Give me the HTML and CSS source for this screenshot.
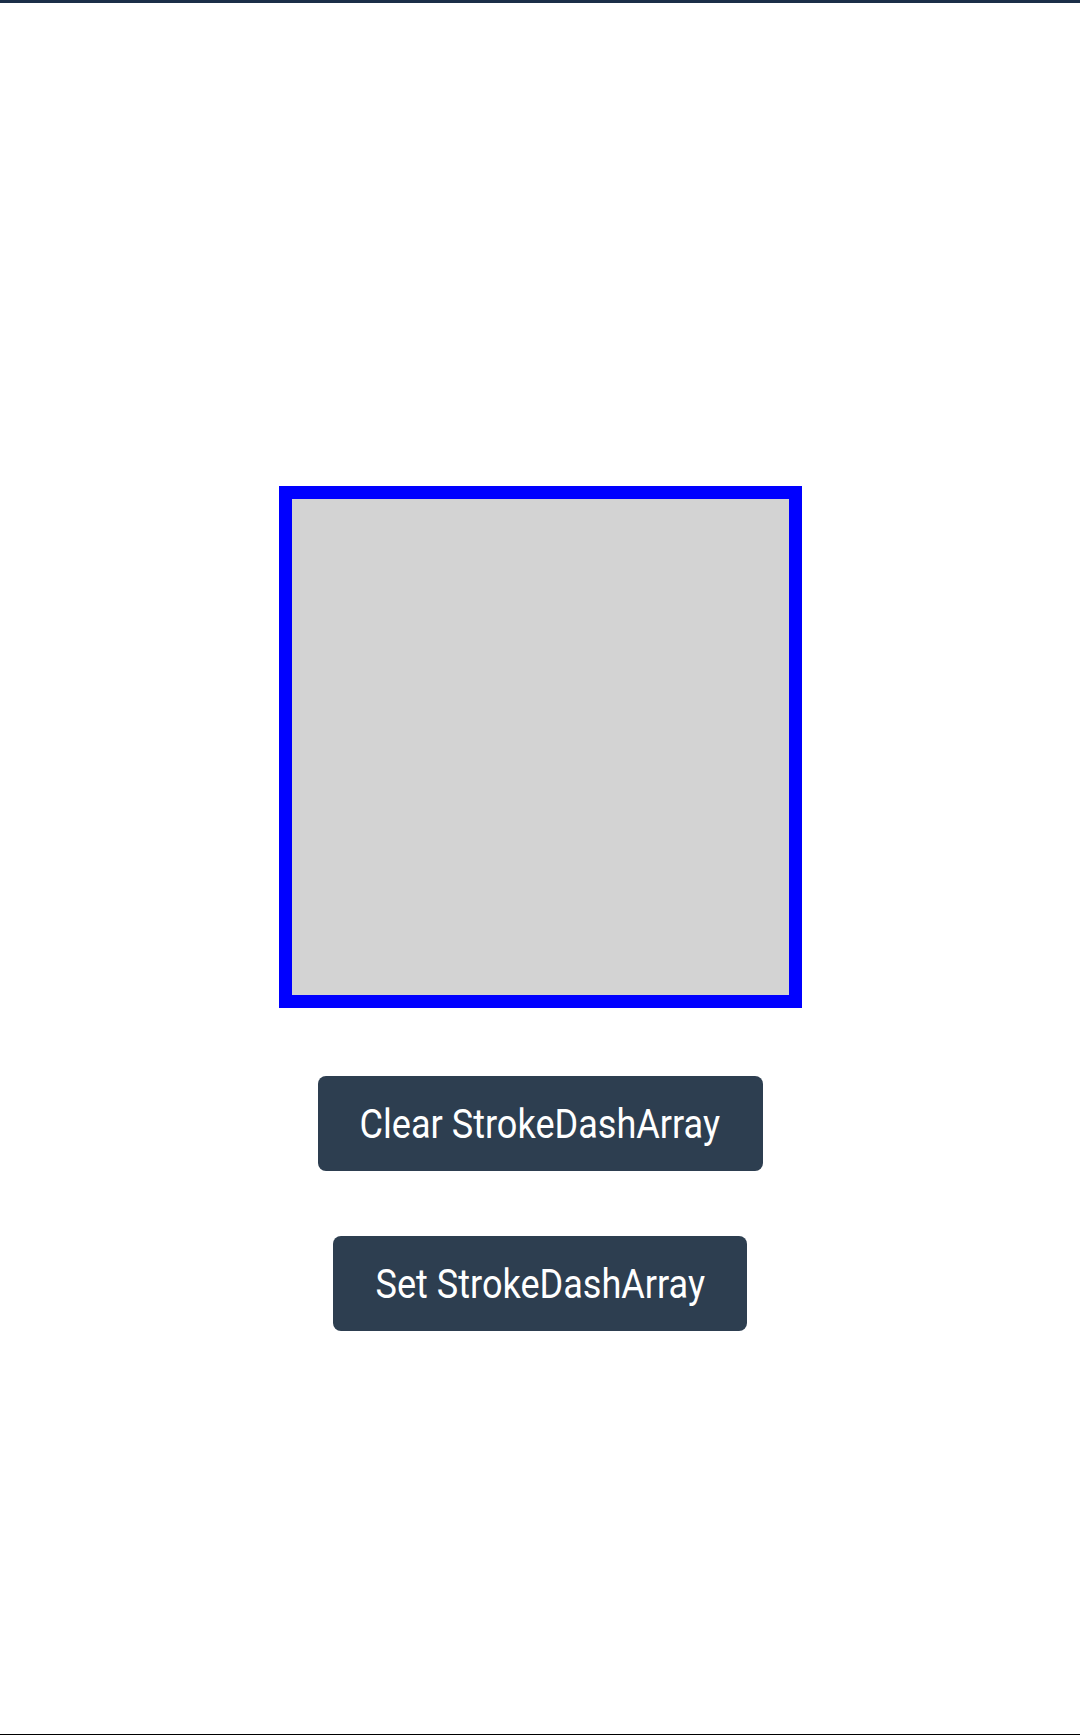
FILE: index.html
```html
<!DOCTYPE html>
<html>
<head>
<meta charset="utf-8">
<link rel="stylesheet" href="styles.css">
</head>
<body>
<div class="topbar"></div>
<main class="page">
  <div class="square"></div>
  <button class="btn btn-clear"><span class="label">Clear StrokeDashArray</span></button>
  <button class="btn btn-set"><span class="label">Set StrokeDashArray</span></button>
</main>
<div class="bottomline"></div>
</body>
</html>
```

FILE: styles.css
```css
html, body {
  margin: 0;
  padding: 0;
  background: #ffffff;
  font-family: Roboto, "Liberation Sans", sans-serif;
}
body {
  width: 1080px;
  height: 1735px;
  display: flex;
  flex-direction: column;
  overflow: hidden;
}
.topbar {
  height: 3px;
  background: #1b2f48;
  flex: none;
}
.page {
  flex: 1;
  display: flex;
  flex-direction: column;
  align-items: center;
  padding-top: 483px;
}
.square {
  width: 523px;
  height: 522px;
  box-sizing: border-box;
  border: 13px solid #0000ff;
  background: #d3d3d3;
  margin-left: 1px;
}
.btn {
  box-sizing: border-box;
  height: 95px;
  border: none;
  border-radius: 8px;
  background: #2d3e50;
  color: #ffffff;
  font-family: Roboto, "Liberation Sans", sans-serif;
  font-size: 41px;
  white-space: nowrap;
  padding: 0;
  display: flex;
  align-items: center;
  justify-content: center;
}
.label {
  display: inline-block;
  flex: none;
  transform: scaleX(0.88);
}
.btn-clear {
  margin-top: 68px;
  width: 445px;
}
.btn-set {
  margin-top: 65px;
  width: 414px;
}
.bottomline {
  height: 1px;
  background: #000000;
  flex: none;
}
```
